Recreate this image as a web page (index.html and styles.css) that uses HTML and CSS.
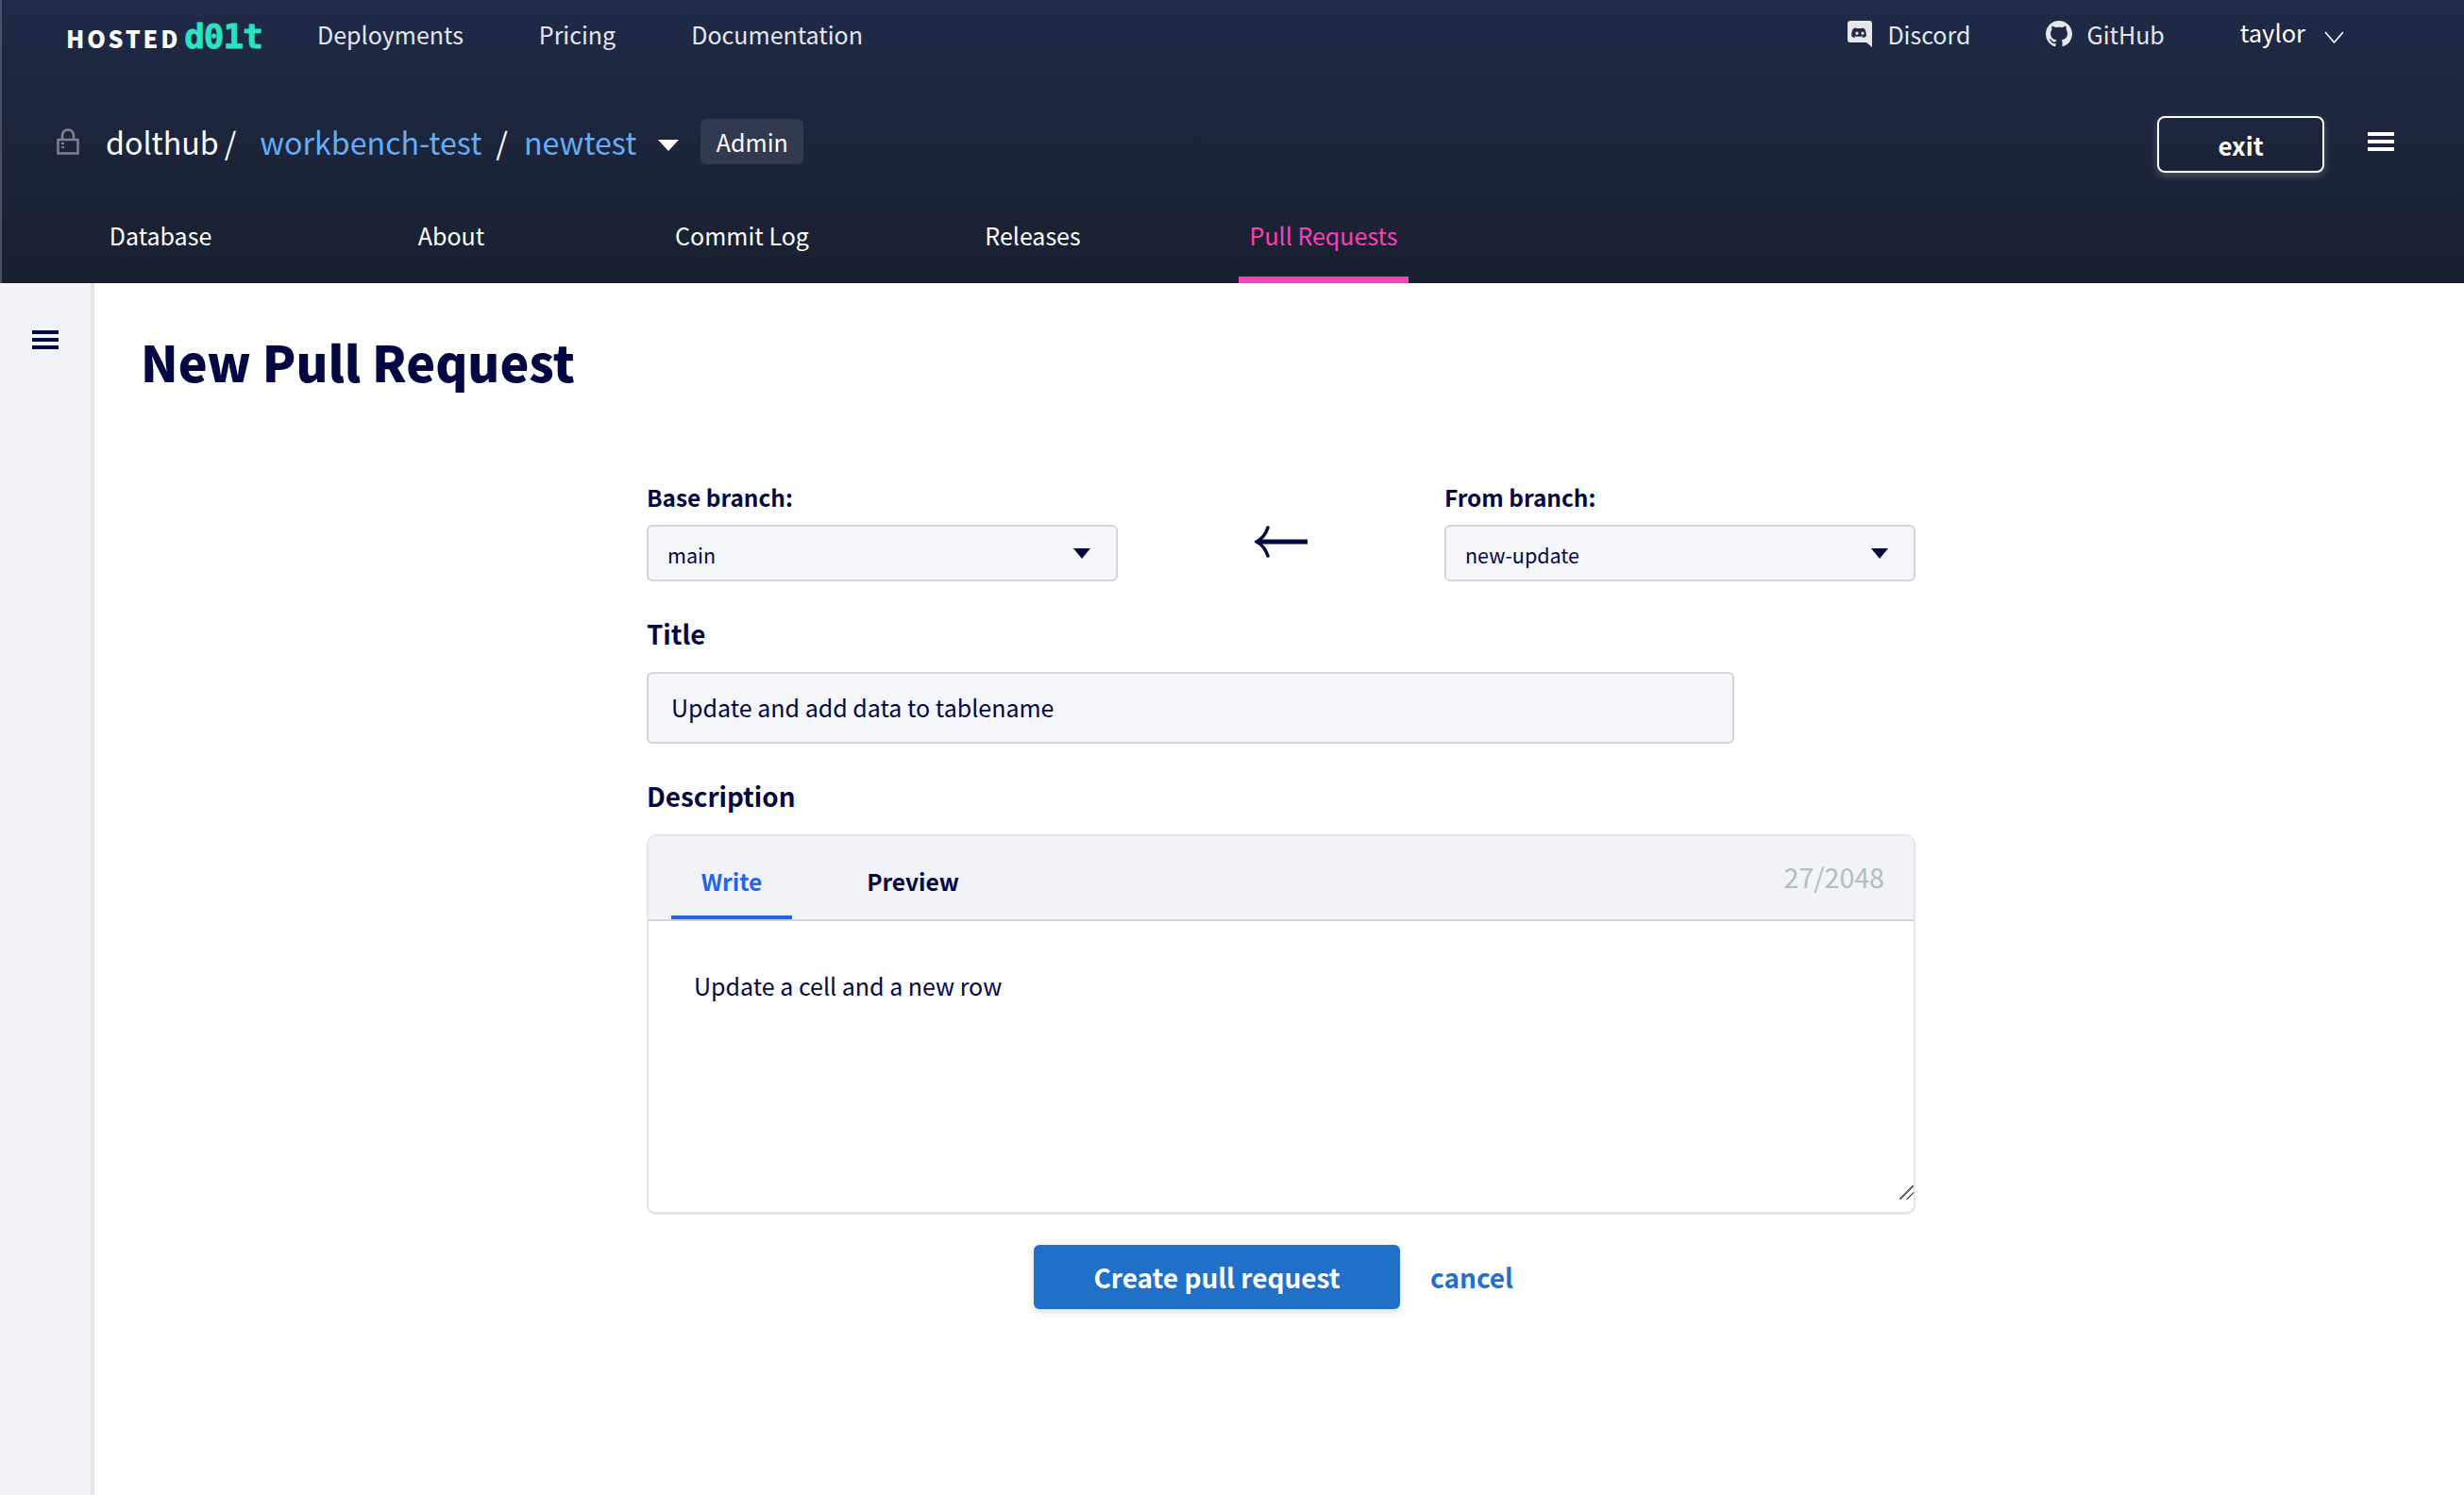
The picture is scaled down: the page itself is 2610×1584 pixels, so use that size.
FILE: index.html

```html
<!DOCTYPE html>
<html lang="en">
<head>
  <meta charset="UTF-8">
  <title>New Pull Request - Hosted Dolt</title>
  <link rel="stylesheet" href="styles.css">
</head>
<body>

<header class="header">
  <div class="top-nav">
    <a class="logo"><span class="logo-hosted">HOSTED</span><span class="logo-dolt">d01t</span></a>
    <a class="nav-link link-deploy">Deployments</a>
    <a class="nav-link link-pricing">Pricing</a>
    <a class="nav-link">Documentation</a>
    <div class="nav-right">
      <a class="nav-link icon-link">
        <svg class="icon-discord" viewBox="0 0 26 28"><path fill="#e6e7eb" fill-rule="evenodd" d="M3 0h20a3 3 0 0 1 3 3v25l-6-5H3a3 3 0 0 1-3-3V3a3 3 0 0 1 3-3zM8.500 7.500c-1 .3-2 .7-2.700 1.200C4.500 11 4 14 4.300 16.500c1.200.9 2.300 1.300 3.400 1.600l.8-1.200-1.400-.7.400-.3c2.800 1.200 6.200 1.200 9 0l.4.300-1.400.7.800 1.200c1.100-.3 2.200-.7 3.400-1.600.3-3-.4-5.700-1.500-7.800-.7-.5-1.700-.9-2.700-1.200l-.4.800a11 11 0 0 0-4.200 0zM10 11.500a1.600 1.800 0 1 1 0 3.600 1.600 1.800 0 0 1 0-3.600zm6 0a1.600 1.800 0 1 1 0 3.600 1.600 1.800 0 0 1 0-3.600z"/></svg>
        Discord
      </a>
      <a class="nav-link icon-link">
        <svg class="icon-github" viewBox="0 0 16 16"><path fill="#e6e7eb" d="M8 0C3.580 0 0 3.580 0 8c0 3.540 2.290 6.530 5.470 7.590.4.070.55-.17.55-.38 0-.19-.01-.82-.01-1.490-2.010.37-2.530-.49-2.690-.94-.09-.23-.48-.94-.82-1.130-.28-.15-.68-.52-.01-.53.63-.01 1.080.58 1.230.82.720 1.210 1.870.87 2.330.66.070-.52.280-.87.510-1.070-1.780-.2-3.640-.89-3.640-3.950 0-.87.31-1.590.82-2.150-.08-.2-.36-1.020.08-2.120 0 0 .67-.21 2.200.82.64-.18 1.320-.27 2-.27s1.360.09 2 .27c1.530-1.040 2.200-.82 2.200-.82.440 1.100.160 1.920.080 2.120.510.560.820 1.270.820 2.150 0 3.070-1.870 3.750-3.650 3.950.290.250.540.730.540 1.480 0 1.070-.010 1.930-.010 2.200 0 .210.150.460.550.380A8.010 8.010 0 0 0 16 8c0-4.420-3.580-8-8-8z"/></svg>
        GitHub
      </a>
      <a class="user-menu">taylor
        <svg class="icon-chevron" viewBox="0 0 21 13"><path fill="none" stroke="#fff" stroke-width="1.600" d="M1 1l9.500 11L20 1"/></svg>
      </a>
    </div>
  </div>

  <div class="repo-row">
    <svg class="icon-lock" viewBox="0 0 24 28">
      <path fill="none" stroke="#7d8390" stroke-width="2.500" d="M6 12V7.500a6 6 0 0 1 12 0V12"/>
      <path fill="none" stroke="#7d8390" stroke-width="2.500" d="M1.500 12h21v14.500h-21z"/>
      <path fill="#7d8390" d="M5 15h3v2H5zm0 4h3v2H5z"/>
    </svg>
    <span class="repo-owner">dolthub</span>
    <span class="repo-sep sep-first">/</span>
    <a class="repo-link repo-name">workbench-test</a>
    <span class="repo-sep sep-second">/</span>
    <a class="repo-link">newtest</a>
    <span class="caret-white"></span>
    <span class="badge">Admin</span>
    <div class="repo-actions">
      <button class="btn-exit" type="button">exit</button>
      <svg class="icon-menu" viewBox="0 0 28 20"><path fill="#fff" d="M0 0h28v4H0zm0 8h28v4H0zm0 8h28v4H0z"/></svg>
    </div>
  </div>

  <nav class="tabs">
    <a class="tab">Database</a>
    <a class="tab">About</a>
    <a class="tab">Commit Log</a>
    <a class="tab">Releases</a>
    <a class="tab tab-active">Pull Requests</a>
  </nav>
</header>

<div class="layout">
  <aside class="sidebar">
    <svg class="icon-menu-dark" viewBox="0 0 28 20"><path fill="#030742" d="M0 0h28v4H0zm0 8h28v4H0zm0 8h28v4H0z"/></svg>
  </aside>

  <main class="content">
    <h1>New Pull Request</h1>

    <form class="pr-form">
      <div class="branch-row">
        <div class="branch-field">
          <label class="branch-label">Base branch:</label>
          <div class="select"><span>main</span><span class="caret-dark"></span></div>
        </div>
        <svg class="icon-arrow" viewBox="0 0 56 34"><path fill="none" stroke="#030742" stroke-width="5" d="M4 17h52"/><path fill="none" stroke="#030742" stroke-width="3.500" stroke-linecap="round" d="M14 2C12 8 8 14 2 17c6 3 10 9 12 15"/></svg>
        <div class="branch-field">
          <label class="branch-label">From branch:</label>
          <div class="select"><span>new-update</span><span class="caret-dark"></span></div>
        </div>
      </div>

      <label class="field-label label-title">Title</label>
      <div class="title-input">Update and add data to tablename</div>

      <label class="field-label label-desc">Description</label>
      <div class="desc-box">
        <div class="desc-tabs">
          <span class="desc-tab desc-tab-active">Write</span>
          <span class="desc-tab">Preview</span>
          <span class="char-count">27/2048</span>
        </div>
        <textarea class="desc-text">Update a cell and a new row</textarea>
      </div>

      <div class="form-actions">
        <button class="btn-create" type="button">Create pull request</button>
        <a class="cancel">cancel</a>
      </div>
    </form>
  </main>
</div>

</body>
</html>
```

FILE: styles.css

```css
html, body { margin: 0; padding: 0; }
body { font-family: "Noto Sans CJK SC", "Noto Sans", sans-serif; background: #fff; color: #030742; height: 1584px; overflow: hidden; }
a { display: block; }

.header { height: 300px; box-sizing: border-box; background: linear-gradient(#1f2a48, #19202f); border-left: 2px solid #4a5163; color: #fff; }

.top-nav { display: flex; align-items: center; height: 72px; padding-left: 68px; }
.logo { display: flex; align-items: baseline; width: 266px; font-weight: 900; line-height: 30px; padding-top: 6px; }
.logo-hosted { font-size: 25px; letter-spacing: 2.800px; color: #fff; }
.logo-dolt { font-family: "DejaVu Sans Mono", monospace; font-size: 36px; font-weight: 700; letter-spacing: -1px; margin-left: 4px; color: #29e3c1; -webkit-text-stroke: .8px #29e3c1; }
.nav-link { font-size: 25px; line-height: 36px; color: #e6e7eb; }
.link-deploy { margin-right: 80px; }
.link-pricing { margin-right: 80px; }
.nav-right { display: flex; align-items: center; margin-left: auto; padding-right: 127px; }
.icon-link { display: flex; align-items: center; margin-right: 80px; }
.icon-discord { width: 26px; height: 28px; margin-right: 16px; }
.icon-github { width: 28px; height: 28px; margin-right: 15px; }
.user-menu { display: flex; align-items: center; font-size: 25.500px; line-height: 36px; margin-top: -4px; color: #fff; }
.icon-chevron { width: 21px; height: 13px; margin: 10px 0 0 20px; }

.repo-row { display: flex; align-items: center; height: 76px; margin-top: 40px; padding-left: 58px; font-size: 32.200px; line-height: 48px; }
.icon-lock { width: 24px; height: 28px; margin-right: 28px; }
.repo-owner { color: #fff; }
.repo-sep { color: #fff; }
.sep-first { margin: 0 25px 0 6px; }
.sep-second { margin: 0 17px 0 15px; }
.repo-link { color: #65adf9; }
.caret-white { width: 0; height: 0; margin: 8px 23px 0 23px; border-left: 11px solid transparent; border-right: 11px solid transparent; border-top: 12px solid #fff; }
.badge { font-size: 25px; line-height: 48px; padding: 0 16.500px; background: #323a52; border-radius: 6px; }
.repo-actions { display: flex; align-items: center; margin-left: auto; padding-right: 74px; }
.btn-exit { width: 177px; height: 60px; margin-top: 6px; box-sizing: border-box; background: transparent; border: 2.500px solid #fff; border-radius: 8px; color: #fff; font-family: inherit; font-size: 26px; font-weight: 700; line-height: 30px; box-shadow: 0 3px 8px rgba(255,255,255,.25); padding: 2px 0 0; }
.icon-menu { width: 28px; height: 20px; margin: 0 0 0 46px; }

.tabs { display: flex; gap: 128px; padding: 44px 0 0 78px; margin-top: -4px; }
.tab { width: 180px; height: 72px; box-sizing: border-box; font-size: 25px; line-height: 36px; padding-top: 3px; text-align: center; color: #fff; border-bottom: 7px solid transparent; white-space: nowrap; }
.tab-active { color: #fb3fbe; border-bottom-color: #fb3fbe; }

.layout { display: flex; height: 1284px; }
.sidebar { width: 100px; box-sizing: border-box; background: #f1f3f8; border-right: 4px solid #e2e4ea; padding: 50px 0 0 34px; }
.icon-menu-dark { display: block; width: 28px; height: 20px; }

.content { flex: 1; padding: 0 49px; }
h1 { margin: 47px 0 0; font-size: 52px; line-height: 72px; font-weight: 900; color: #030742; }

.pr-form { width: 1344px; margin: 91px 0 0 536px; }
.branch-row { display: flex; justify-content: space-between; align-items: center; }
.branch-field { width: 499px; }
.branch-label { display: block; font-size: 24.400px; font-weight: 700; line-height: 34px; }
.select { display: flex; justify-content: space-between; align-items: center; height: 60px; box-sizing: border-box; margin-top: 12px; padding: 2px 27px 0 20px; font-size: 21.500px; background: #f5f6fa; border: 2px solid #d1d3dc; border-radius: 6px; }
.caret-dark { width: 0; height: 0; margin-top: -2px; border-left: 9px solid transparent; border-right: 9px solid transparent; border-top: 11px solid #030742; }
.icon-arrow { width: 56px; height: 34px; margin-top: 22px; }

.field-label { display: block; font-size: 27.800px; font-weight: 700; line-height: 40px; }
.label-title { margin-top: 35px; }
.title-input { width: 1152px; height: 76px; box-sizing: border-box; margin-top: 21px; padding: 0 24px; font-size: 25px; line-height: 70px; background: #f5f6fa; border: 2px solid #d1d3dc; border-radius: 6px; }
.label-desc { margin-top: 35px; }

.desc-box { margin-top: 21px; padding: 0 0 13px; background: #fff; border: 2px solid #e2e6ea; border-bottom-width: 3px; border-radius: 10px; overflow: hidden; }
.desc-tabs { display: flex; align-items: flex-end; height: 90px; box-sizing: border-box; padding-left: 24px; background: #f1f3f8; border-bottom: 2px solid #d1d3dc; }
.desc-tab { width: 128px; height: 66px; box-sizing: border-box; margin-right: 64px; font-size: 24.500px; font-weight: 700; line-height: 36px; padding-top: 8px; text-align: center; }
.desc-tab-active { color: #2563eb; border-bottom: 4px solid #2563eb; }
.char-count { align-self: flex-start; margin: 23px 31px 0 auto; font-size: 28.600px; line-height: 40px; color: #b0bfbd; }
.desc-text { display: block; width: 100%; height: 295px; box-sizing: border-box; padding: 50px 48px 0; border: 0; outline: 0; font-family: inherit; font-size: 25px; line-height: 36px; color: #030742; background: #fff; }
.desc-text::-webkit-resizer { background: linear-gradient(135deg, transparent 46%, #666 46% 54%, transparent 54% 71%, #666 71% 79%, transparent 79%); }

.form-actions { display: flex; align-items: center; margin: 32px 0 0 410px; }
.btn-create { width: 388px; height: 68px; background: #2070c9; border: 0; border-radius: 6px; color: #fff; font-family: inherit; font-size: 28px; font-weight: 700; line-height: 40px; box-shadow: 0 3px 8px rgba(0,0,0,.15); padding: 0; }
.cancel { margin-left: 32px; font-size: 28px; font-weight: 700; line-height: 40px; color: #2070c9; }
```
